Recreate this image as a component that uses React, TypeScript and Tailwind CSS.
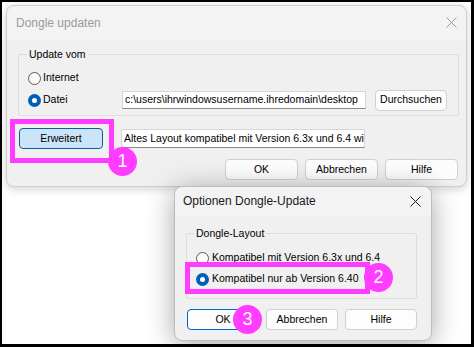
import React from "react";

const font = { fontFamily: '"Liberation Sans", Arial, sans-serif' };

function Radio({ checked }: { checked?: boolean }) {
  return checked ? (
    <span className="flex h-[13px] w-[13px] shrink-0 items-center justify-center rounded-full bg-[#005fb8]">
      <span className="h-[5px] w-[5px] rounded-full bg-white" />
    </span>
  ) : (
    <span className="h-[13px] w-[13px] shrink-0 rounded-full border border-[#5a5a5a] bg-[#fbfbfb]" />
  );
}

function XIcon({ color }: { color: string }) {
  return (
    <svg width="11" height="11" viewBox="0 0 11 11">
      <path d="M0.5 0.5 L10.5 10.5 M10.5 0.5 L0.5 10.5" stroke={color} strokeWidth="1" fill="none" />
    </svg>
  );
}

function Btn({ children, w, def, hl }: { children: React.ReactNode; w: string; def?: boolean; hl?: boolean }) {
  const cls = hl
    ? "border-[#0f5b9e] bg-[#cce4f7]"
    : def
    ? "border-[#0067c0] bg-[#fdfdfd]"
    : "border-[#d0d0d0] bg-[#fdfdfd]";
  return (
    <div className={`flex h-[21px] ${w} items-center justify-center rounded-[4px] border ${cls} text-[10.5px] text-black`}>
      {children}
    </div>
  );
}

function Badge({ n, className }: { n: string; className: string }) {
  return (
    <div className={`absolute flex h-[29px] w-[29px] items-center justify-center rounded-full bg-[#ff3cff] text-[18px] text-white ${className}`}>
      {n}
    </div>
  );
}

export default function App() {
  return (
    <div
      style={font}
      className="relative h-[347px] w-[474px] overflow-hidden border-b-[3px] border-l-2 border-r-[3px] border-t-2 border-black bg-white"
    >
      {/* Main dialog */}
      <div className="absolute left-[4px] top-[3px] flex h-[182px] w-[461px] flex-col rounded-[8px] border border-[#cdcdcd] bg-[#f0f0f0] shadow-[0_2px_10px_rgba(0,0,0,0.18)]">
        <div className="flex h-[33px] items-center justify-between rounded-t-[8px] bg-[#f3f3f3] pl-[9px] pr-[9px]">
          <span className="text-[12px] text-[#9a9a9a]">Dongle updaten</span>
          <XIcon color="#9a9a9a" />
        </div>
        <div className="flex flex-col px-[11px] pr-[7px] pt-[15px]">
          <div className="relative flex flex-col gap-[5px] rounded-[2px] border border-[#dcdcdc] pb-[5px] pl-[9px] pt-[16px]">
            <span className="absolute -top-[7px] left-[8px] bg-[#f0f0f0] px-[2px] text-[10.5px] leading-[13px] text-black">
              Update vom
            </span>
            <div className="flex h-[14px] items-center gap-[2px] text-[10.5px]">
              <Radio />
              <span>Internet</span>
            </div>
            <div className="flex h-[20px] items-center text-[10.5px]">
              <div className="flex w-[94px] items-center gap-[2px]">
                <Radio checked />
                <span>Datei</span>
              </div>
              <div className="flex h-[18px] w-[244px] items-center overflow-hidden whitespace-nowrap border border-[#d6d6d6] border-b-[#8a8a8a] bg-white pl-[2px]">
                c:\users\ihrwindowsusername.ihredomain\desktop
              </div>
              <div className="ml-[9px]">
                <Btn w="w-[72px]">Durchsuchen</Btn>
              </div>
            </div>
          </div>
          <div className="mt-[12px] flex h-[21px] items-center pl-[1px]">
            <Btn w="w-[84px]" hl>
              Erweitert
            </Btn>
            <div className="ml-[18px] flex h-[19px] w-[244px] items-center overflow-hidden whitespace-nowrap border border-[#d6d6d6] border-b-[#8a8a8a] bg-white pl-[2px] text-[10.5px]">
              Altes Layout kompatibel mit Version 6.3x und 6.4 wi
            </div>
          </div>
          <div className="mt-[10px] flex justify-end gap-[7px] pr-[1px]">
            <Btn w="w-[73px]">OK</Btn>
            <Btn w="w-[73px]">Abbrechen</Btn>
            <Btn w="w-[73px]">Hilfe</Btn>
          </div>
        </div>
      </div>

      {/* Highlight 1 */}
      <div className="absolute left-[8px] top-[117px] h-[44px] w-[104px] border-[5px] border-[#ff3cff]" />
      <Badge n="1" className="left-[106px] top-[145px]" />

      {/* Options dialog */}
      <div className="absolute left-[172px] top-[184px] flex h-[155px] w-[258px] flex-col rounded-[8px] border border-[#bdbdbd] bg-[#f0f0f0] shadow-[0_4px_28px_rgba(0,0,0,0.35)]">
        <div className="flex h-[28px] items-center justify-between rounded-t-[8px] bg-[#f3f3f3] pl-[8px] pr-[10px]">
          <span className="text-[12px] text-[#1a1a1a]">Optionen Dongle-Update</span>
          <XIcon color="#1a1a1a" />
        </div>
        <div className="flex flex-col pl-[11px] pr-[14px] pt-[18px]">
          <div className="relative flex flex-col gap-[7px] rounded-[2px] border border-[#dcdcdc] pb-[12px] pl-[9px] pt-[17px]">
            <span className="absolute -top-[7px] left-[7px] bg-[#f0f0f0] px-[2px] text-[10.5px] leading-[13px] text-black">
              Dongle-Layout
            </span>
            <div className="flex h-[14px] items-center gap-[3px] text-[10.5px]">
              <Radio />
              <span>Kompatibel mit Version 6.3x und 6.4</span>
            </div>
            <div className="flex h-[14px] items-center gap-[3px] text-[10.5px]">
              <Radio checked />
              <span>Kompatibel nur ab Version 6.40</span>
            </div>
          </div>
          <div className="mt-[10px] flex gap-[7px] pl-[1px]">
            <Btn w="w-[72px]" def>
              OK
            </Btn>
            <Btn w="w-[72px]">Abbrechen</Btn>
            <Btn w="w-[72px]">Hilfe</Btn>
          </div>
        </div>
      </div>

      {/* Highlight 2 & 3 */}
      <div className="absolute left-[183px] top-[260px] h-[32px] w-[185px] border-[5px] border-[#ff3cff]" />
      <Badge n="2" className="left-[362px] top-[261px]" />
      <Badge n="3" className="left-[231px] top-[303px]" />
    </div>
  );
}
